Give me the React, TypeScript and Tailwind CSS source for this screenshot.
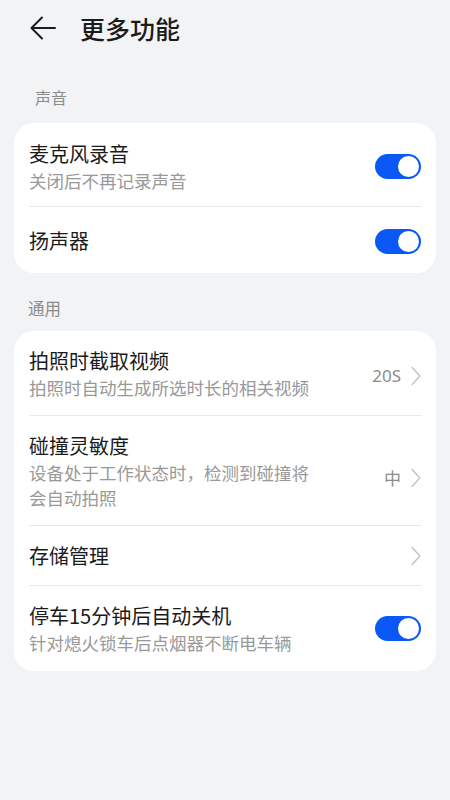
import React from "react";

const font = {
  fontFamily: '"Noto Sans CJK SC", "Noto Sans", sans-serif',
};

const Toggle: React.FC = () => (
  <div className="flex h-[25px] w-[46px] shrink-0 items-center justify-end rounded-full bg-[#0a59f7] pr-[2px]">
    <div className="h-[21px] w-[21px] rounded-full bg-white" />
  </div>
);

const Chevron: React.FC = () => (
  <svg width="10" height="20" viewBox="0 0 10 20" fill="none" className="shrink-0">
    <path d="M1.2 1.5 L8.8 10 L1.2 18.5" stroke="#c4c4c4" strokeWidth="1.5" strokeLinecap="round" strokeLinejoin="round" />
  </svg>
);

type RowProps = {
  title: string;
  sub?: React.ReactNode;
  right: React.ReactNode;
  className?: string;
  last?: boolean;
};

const Row: React.FC<RowProps> = ({ title, sub, right, className, last }) => (
  <div className={`flex items-center justify-between gap-3 ${last ? "" : "border-b border-[#e9e9ea]"} ${className ?? ""}`}>
    <div className="flex flex-col">
      <div className="text-[20px] leading-[28px] text-[#1b1b1b]">{title}</div>
      {sub && <div className="text-[17.5px] leading-[25px] text-[#999999]">{sub}</div>}
    </div>
    {right}
  </div>
);

export default function App() {
  return (
    <div className="min-h-[800px] w-[450px] bg-[#f1f3f5]" style={font}>
      <div className="flex h-[56px] items-center pl-[30px]">
        <svg width="26" height="24" viewBox="0 0 26 24" fill="none">
          <path d="M25 12 H2 M12 1.5 L1.5 12 L12 22.5" stroke="#1b1b1b" strokeWidth="2" strokeLinecap="round" strokeLinejoin="round" />
        </svg>
        <div className="ml-[24px] text-[25px] leading-[32px] font-medium text-[#1b1b1b]">更多功能</div>
      </div>

      <div className="pl-[35px] pt-[29px] text-[16px] leading-[24px] text-[#8c8c8c]">声音</div>
      <div className="mx-[14px] mt-[14px] rounded-[20px] bg-white px-[15px]">
        <Row title="麦克风录音" sub="关闭后不再记录声音" right={<Toggle />} className="h-[84px] pt-[3px]" />
        <Row title="扬声器" right={<Toggle />} className="h-[66px] pt-[2px]" last />
      </div>

      <div className="pl-[28px] pt-[23px] text-[16.5px] leading-[24px] text-[#8c8c8c]">通用</div>
      <div className="mx-[14px] mt-[11px] rounded-[20px] bg-white px-[15px]">
        <Row
          title="拍照时截取视频"
          sub="拍照时自动生成所选时长的相关视频"
          right={
            <div className="flex items-center gap-[10px] pt-[5px]">
              <span className="text-[17px] text-[#8c8c8c]" style={{ fontFamily: '"Noto Sans", sans-serif' }}>20S</span>
              <Chevron />
            </div>
          }
          className="h-[85px] pt-[1px]"
        />
        <Row
          title="碰撞灵敏度"
          sub={<>设备处于工作状态时，检测到碰撞将<br />会自动拍照</>}
          right={
            <div className="flex items-center gap-[10px] pt-[14px]">
              <span className="text-[17px] text-[#8c8c8c]">中</span>
              <Chevron />
            </div>
          }
          className="h-[110px] pt-[1px]"
        />
        <Row title="存储管理" right={<Chevron />} className="h-[60px]" />
        <Row
          title="停车15分钟后自动关机"
          sub="针对熄火锁车后点烟器不断电车辆"
          right={<Toggle />}
          className="h-[85px]"
          last
        />
      </div>
    </div>
  );
}
